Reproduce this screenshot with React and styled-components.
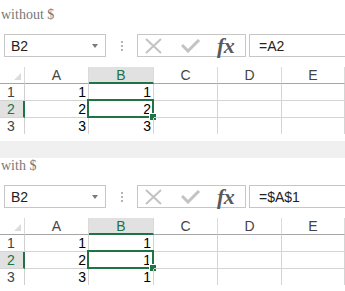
import React from "react";
import styled, { createGlobalStyle } from "styled-components";

const Global = createGlobalStyle`
  html, body { margin: 0; padding: 0; background: #fff; }
  body { font-family: "Liberation Sans", Arial, sans-serif; }
`;

const Page = styled.div`
  width: 345px;
  overflow: hidden;
`;

const Section = styled.section`
  padding-top: ${(p) => (p.$first ? 7 : 0)}px;
  padding-bottom: 7px;
`;

const Label = styled.div`
  font-family: "Liberation Serif", "Times New Roman", serif;
  font-size: 14px;
  line-height: 16px;
  color: #777;
  padding-left: 1px;
  margin-bottom: 11px;
`;

const Band = styled.div`
  height: 17px;
  background: #f0f0f0;
`;

const Toolbar = styled.div`
  display: flex;
  align-items: stretch;
  height: 23px;
  padding-left: 4px;
  margin-bottom: 10px;
`;

const NameBox = styled.div`
  border: 1px solid #c6c6c6;
  display: flex;
  align-items: center;
  justify-content: space-between;
  padding: 0 6px 0 6px;
  box-sizing: border-box;
  width: 102px;
  font-size: 14px;
  color: #222;
`;

const Caret = styled.span`
  width: 0;
  height: 0;
  border-left: 3.5px solid transparent;
  border-right: 3.5px solid transparent;
  border-top: 4px solid #7a7a7a;
  margin-right: 1px;
`;

const Dots = styled.div`
  width: 31px;
  display: flex;
  flex-direction: column;
  align-items: center;
  justify-content: center;
  gap: 2px;
`;

const Dot = styled.span`
  width: 2px;
  height: 2px;
  background: #b4b4b4;
`;

const ButtonGroup = styled.div`
  width: 109px;
  box-sizing: border-box;
  border: 1px solid #c6c6c6;
  display: flex;
  align-items: center;
  padding-left: 7px;
`;

const IconSlot = styled.span`
  width: ${(p) => p.$w}px;
  display: flex;
  align-items: center;
  justify-content: flex-start;
`;

const Fx = styled.span`
  font-family: "Liberation Serif", "Times New Roman", serif;
  font-style: italic;
  font-weight: bold;
  font-size: 22px;
  line-height: 20px;
  color: #5a5a5a;
  letter-spacing: -0.5px;
  margin-top: 1px;
`;

const FormulaBox = styled.div`
  flex: 1;
  margin-left: 3px;
  margin-right: -4px;
  border: 1px solid #c6c6c6;
  display: flex;
  align-items: center;
  padding-left: 9px;
  font-size: 14px;
  color: #222;
`;

const Grid = styled.div`
  display: grid;
  grid-template-columns: 25px 64px 65px 64px 64px 63px;
`;

const Corner = styled.div`
  position: relative;
  height: 16px;
  border-right: 1px solid #dadada;
  border-bottom: 1px solid #a6a6a6;
`;

const CornerTri = styled.span`
  position: absolute;
  right: 3px;
  bottom: 3px;
  width: 0;
  height: 0;
  border-left: 7px solid transparent;
  border-bottom: 7px solid #dcdcdc;
`;

const ColHead = styled.div`
  height: ${(p) => (p.$sel ? 15 : 16)}px;
  line-height: 16px;
  text-align: center;
  font-size: 14px;
  color: ${(p) => (p.$sel ? "#217346" : "#444")};
  background: ${(p) => (p.$sel ? "#e1e1e1" : "#fff")};
  border-right: 1px solid #dadada;
  border-bottom: ${(p) => (p.$sel ? "2px solid #217346" : "1px solid #a6a6a6")};
`;

const RowHead = styled.div`
  height: 16px;
  line-height: 17px;
  font-size: 14px;
  padding-left: 7px;
  color: ${(p) => (p.$sel ? "#217346" : "#444")};
  background: ${(p) => (p.$sel ? "#e1e1e1" : "#fff")};
  border-right: ${(p) => (p.$sel ? "2px solid #217346" : "1px solid #d0d0d0")};
  width: ${(p) => (p.$sel ? 16 : 17)}px;
  border-bottom: ${(p) => (p.$last ? "none" : "1px solid #d4d4d4")};
`;

const Cell = styled.div`
  position: relative;
  height: 16px;
  line-height: 17px;
  font-size: 14px;
  color: #000;
  text-align: right;
  padding-right: 2px;
  border-right: 1px solid #d4d4d4;
  border-bottom: ${(p) => (p.$last ? "none" : "1px solid #d4d4d4")};
`;

const Selection = styled.span`
  position: absolute;
  left: -2px;
  top: -2px;
  right: -1px;
  bottom: -1px;
  border: 2px solid #217346;
  pointer-events: none;
`;

const Handle = styled.span`
  position: absolute;
  right: -5px;
  bottom: -5px;
  width: 6px;
  height: 6px;
  background: #217346;
  border: 1px solid #fff;
`;

const XIcon = () => (
  <svg width="18" height="16" viewBox="0 0 18 16">
    <path d="M1 1 L16 15 M16 1 L1 15" stroke="#c3c3c3" strokeWidth="2" fill="none" />
  </svg>
);

const CheckIcon = () => (
  <svg width="20" height="14" viewBox="0 0 20 14">
    <path d="M1 6 L7 12 L18 1" stroke="#c3c3c3" strokeWidth="3" fill="none" />
  </svg>
);

function Sheet({ label, formula, values, first }) {
  const cols = ["A", "B", "C", "D", "E"];
  return (
    <Section $first={first}>
      <Label>{label}</Label>
      <Toolbar>
        <NameBox>
          <span>B2</span>
          <Caret />
        </NameBox>
        <Dots>
          <Dot />
          <Dot />
          <Dot />
        </Dots>
        <ButtonGroup>
          <IconSlot $w={36}>
            <XIcon />
          </IconSlot>
          <IconSlot $w={36}>
            <CheckIcon />
          </IconSlot>
          <IconSlot $w={24}>
            <Fx>fx</Fx>
          </IconSlot>
        </ButtonGroup>
        <FormulaBox>{formula}</FormulaBox>
      </Toolbar>
      <Grid>
        <Corner>
          <CornerTri />
        </Corner>
        {cols.map((c) => (
          <ColHead key={c} $sel={c === "B"}>
            {c}
          </ColHead>
        ))}
        {values.map((row, i) => {
          const last = i === values.length - 1;
          return (
            <React.Fragment key={i}>
              <RowHead $sel={i === 1} $last={last}>
                {i + 1}
              </RowHead>
              <Cell $last={last}>{row[0]}</Cell>
              <Cell $last={last}>
                {row[1]}
                {i === 1 && (
                  <Selection>
                    <Handle />
                  </Selection>
                )}
              </Cell>
              <Cell $last={last} />
              <Cell $last={last} />
              <Cell $last={last} />
            </React.Fragment>
          );
        })}
      </Grid>
    </Section>
  );
}

export default function App() {
  return (
    <Page>
      <Global />
      <Sheet
        first
        label="without $"
        formula="=A2"
        values={[
          [1, 1],
          [2, 2],
          [3, 3],
        ]}
      />
      <Band />
      <Sheet
        label="with $"
        formula="=$A$1"
        values={[
          [1, 1],
          [2, 1],
          [3, 1],
        ]}
      />
    </Page>
  );
}
